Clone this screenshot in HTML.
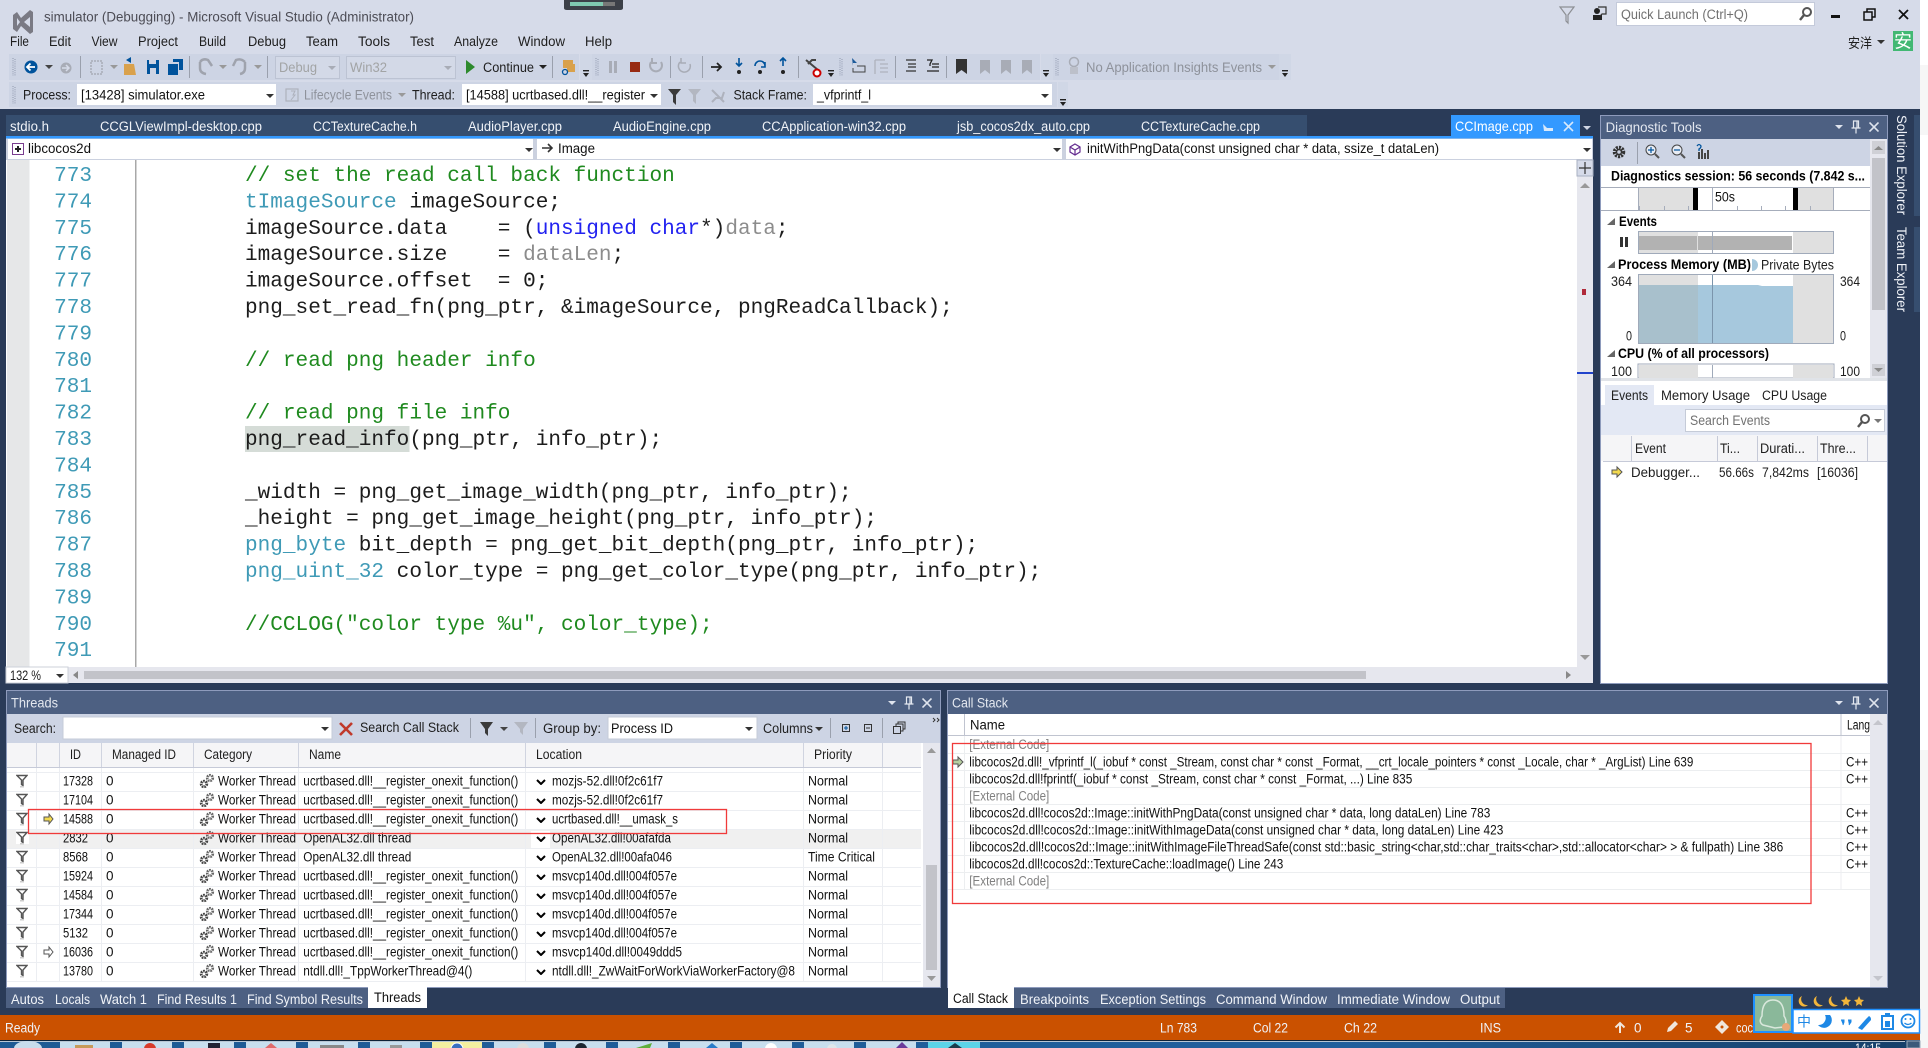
<!DOCTYPE html>
<html><head><meta charset="utf-8"><title>simulator (Debugging) - Microsoft Visual Studio</title>
<style>
html,body{margin:0;padding:0;background:#fff;width:1928px;height:1048px;overflow:hidden}
svg{display:block;position:absolute;left:0;top:0}
text{font-family:"Liberation Sans","Noto Sans CJK SC",sans-serif;font-size:13.5px;fill:#1e1e1e;white-space:pre}
.m{font-family:"Liberation Mono",monospace;font-size:21.07px;fill:#1c1c1c}
.n{font-family:"Liberation Mono",monospace;font-size:21.07px;fill:#3f9ab6;text-anchor:end}
.c{fill:#1f8a1f}.ty{fill:#3f9ab6}.k{fill:#2222f0}.p{fill:#8c8c8c}
.w{fill:#f0f3f8}.g{fill:#a2a4a5}.d{fill:#606060}.e{fill:#808080}.b{font-weight:bold;fill:#000}.k0{fill:#111}
.tt{font-size:14px;fill:#e4e8f0}
</style></head><body>
<svg width="1928" height="1048" viewBox="0 0 1928 1048">
<defs>
<symbol id="fl" viewBox="0 0 12 14" width="12" height="14"><path d="M1 1.500H11L7 6V11.500L5.500 10.500V6Z" fill="#fff" stroke="#555" stroke-width="1.400"/><rect x="4" y="12" width="4" height="1.500" fill="#ccc"/></symbol>
<symbol id="gr" viewBox="0 0 16 16" width="16" height="16"><circle cx="5" cy="11" r="2.800" fill="none" stroke="#444" stroke-width="2.800" stroke-dasharray="1.600 .8"/><circle cx="11" cy="5" r="2.800" fill="none" stroke="#666" stroke-width="2.600" stroke-dasharray="1.600 .8"/></symbol>
<symbol id="ch" viewBox="0 0 10 6" width="10" height="6"><path d="M1 1L5 5L9 1" fill="none" stroke="#000" stroke-width="2"/></symbol>
<symbol id="ar" viewBox="0 0 8 4" width="8" height="4"><path d="M0 0H8L4 4Z"/></symbol>
<symbol id="of" viewBox="0 0 8 8" width="8" height="8"><rect x="1" y="0" width="6" height="1.400" fill="#222"/><path d="M1 3H7L4 7Z" fill="#222"/></symbol>
<symbol id="pin" viewBox="0 0 10 14" width="10" height="14"><path d="M2.500 1H7.500V8H2.500ZM0.500 8H9.500M5 8V13.500M6 1.500V8" fill="none" stroke="#e4e8f0" stroke-width="1.200"/></symbol>
<symbol id="xx" viewBox="0 0 10 10" width="10" height="10"><path d="M0.500 0.500L9.500 9.500M9.500 0.500L0.500 9.500" stroke="#dfe4ee" stroke-width="1.600"/></symbol>
<symbol id="gp" viewBox="0 0 4 20" width="4" height="20"><path d="M1 1V19M3 2V19" stroke="#8f98ad" stroke-width="1" stroke-dasharray="1 1.200"/></symbol>
</defs>

<!-- base -->
<rect width="1928" height="1048" fill="#f6f6f6"/>
<rect x="1920" width="8" height="65" fill="#fff"/><rect x="1920" y="135" width="8" height="615" fill="#fff"/>
<rect width="1920" height="1040" fill="#2a3b58"/>
<rect width="1920" height="109" fill="#d6dbe9"/>

<!-- title -->
<path d="M13 15L17 12L21 18L30 10L33 12V32L30 34L21 26L17 32L13 29V15ZM17 18V26L20 22ZM24 22L30 27V17Z" fill="#7a7a84" fill-rule="evenodd"/>
<text x="44" y="21.500" textLength="370" lengthAdjust="spacingAndGlyphs" style="fill:#4c4c55">simulator (Debugging) - Microsoft Visual Studio (Administrator)</text>
<path d="M564 0H623V8Q623 10 620 10H567Q564 10 564 8Z" fill="#3c4048"/>
<rect x="570" y="2" width="33" height="4" fill="#7fc8b0"/><rect x="603" y="2" width="12" height="4" fill="#777"/>
<path d="M1560 7H1574L1568 15V23L1566 21V15Z" fill="none" stroke="#8d8f94" stroke-width="1.200"/>
<rect x="1593" y="15" width="9" height="5" fill="#222"/><circle cx="1597" cy="11" r="3" fill="#222"/><path d="M1598 7H1606V14H1602L1600 16" fill="none" stroke="#333" stroke-width="1.200"/>
<rect x="1616.500" y="2.500" width="198" height="23" fill="#fff" stroke="#c4cada"/>
<text x="1621" y="19" textLength="127" lengthAdjust="spacingAndGlyphs" style="fill:#717171">Quick Launch (Ctrl+Q)</text>
<circle cx="1807" cy="12" r="4" fill="none" stroke="#555" stroke-width="2"/><path d="M1804 15L1800 20" stroke="#555" stroke-width="2.400"/>
<rect x="1831" y="15" width="9" height="3" fill="#111"/>
<path d="M1864 12H1872V20H1864ZM1867 12V9H1875V17H1872" fill="none" stroke="#111" stroke-width="1.500"/>
<path d="M1899 10L1908 19M1908 10L1899 19" stroke="#111" stroke-width="1.800"/>
<text x="1848" y="48" textLength="24" lengthAdjust="spacingAndGlyphs">安洋</text>
<use href="#ar" x="1877" y="40" fill="#333"/>
<rect x="1893" y="31" width="20" height="20" fill="#42b873"/>
<text x="1894" y="47.500" style="font-size:18px;fill:#fff">安</text>

<!-- menu -->
<text x="10" y="46" textLength="19" lengthAdjust="spacingAndGlyphs">File</text>
<text x="49" y="46" textLength="22" lengthAdjust="spacingAndGlyphs">Edit</text>
<text x="91.500" y="46" textLength="26" lengthAdjust="spacingAndGlyphs">View</text>
<text x="138" y="46" textLength="40" lengthAdjust="spacingAndGlyphs">Project</text>
<text x="199" y="46" textLength="27" lengthAdjust="spacingAndGlyphs">Build</text>
<text x="248" y="46" textLength="38" lengthAdjust="spacingAndGlyphs">Debug</text>
<text x="306" y="46" textLength="32" lengthAdjust="spacingAndGlyphs">Team</text>
<text x="358" y="46" textLength="32" lengthAdjust="spacingAndGlyphs">Tools</text>
<text x="410" y="46" textLength="24" lengthAdjust="spacingAndGlyphs">Test</text>
<text x="454" y="46" textLength="44" lengthAdjust="spacingAndGlyphs">Analyze</text>
<text x="518" y="46" textLength="47" lengthAdjust="spacingAndGlyphs">Window</text>
<text x="585" y="46" textLength="27" lengthAdjust="spacingAndGlyphs">Help</text>

<!-- toolbar 1 -->
<rect x="9" y="54" width="570" height="26" fill="#cdd4e4"/><rect x="580" y="54" width="12" height="26" fill="#d0d7e6"/>
<rect x="592" y="54" width="448" height="26" fill="#cdd4e4"/><rect x="1041" y="54" width="12" height="26" fill="#d0d7e6"/>
<rect x="1053" y="54" width="226" height="26" fill="#cdd4e4"/><rect x="1279" y="54" width="12" height="26" fill="#d0d7e6"/>
<use href="#gp" x="12" y="57"/><use href="#gp" x="595" y="57"/><use href="#gp" x="839" y="57"/><use href="#gp" x="1055" y="57"/>
<circle cx="31" cy="67" r="6.500" fill="#00539c"/><path d="M35 67H28M30.500 63.500L27 67L30.500 70.500" stroke="#fff" stroke-width="1.800" fill="none"/>
<use href="#ar" x="45" y="65" fill="#444"/>
<circle cx="66" cy="68" r="5.500" fill="#a8acb6"/><path d="M62 68H68M66 65L69 68L66 71" stroke="#d6dbe9" stroke-width="1.500" fill="none"/>
<g fill="#9aa0ad"><rect x="80" y="56" width="1" height="22"/><rect x="189" y="56" width="1" height="22"/><rect x="267" y="56" width="1" height="22"/><rect x="552" y="56" width="1" height="22"/><rect x="670" y="56" width="1" height="22"/><rect x="702" y="56" width="1" height="22"/><rect x="798" y="56" width="1" height="22"/><rect x="895" y="56" width="1" height="22"/><rect x="946" y="56" width="1" height="22"/></g>
<rect x="91" y="61" width="11" height="13" fill="none" stroke="#a8acb6" stroke-width="1.500" stroke-dasharray="2 1"/><use href="#ar" x="110" y="65" fill="#999"/>
<path d="M124 64H134L136 75H124Z" fill="#d9a14c"/><path d="M126 60L131 57V63Z" fill="#00539c"/>
<path d="M147 60H159V74H147Z" fill="#00539c"/><rect x="149" y="60" width="7" height="4" fill="#cdd4e4"/><rect x="150" y="68" width="6" height="6" fill="#cdd4e4"/>
<path d="M168 64H178V75H168Z" fill="#00539c"/><path d="M173 59H183V70H179V62H173Z" fill="#00539c"/>
<path d="M200 62V68Q200 73 206 74M200 62Q203 58 208 60L212 66" fill="none" stroke="#9fa3ad" stroke-width="2.500"/><use href="#ar" x="219" y="65" fill="#999"/>
<path d="M245 62V68Q245 73 240 74M245 62Q241 58 236 60L233 66" fill="none" stroke="#9fa3ad" stroke-width="2.500"/><use href="#ar" x="254" y="65" fill="#999"/>
<rect x="275.500" y="56.500" width="64" height="22" fill="#d3d9e7" stroke="#bcc3d3"/>
<text x="279" y="72" textLength="38" lengthAdjust="spacingAndGlyphs" class="g">Debug</text><use href="#ar" x="328" y="66" fill="#a8acb6"/>
<rect x="346.500" y="56.500" width="109" height="22" fill="#d3d9e7" stroke="#bcc3d3"/>
<text x="350" y="72" textLength="37" lengthAdjust="spacingAndGlyphs" class="g">Win32</text><use href="#ar" x="444" y="66" fill="#a8acb6"/>
<path d="M466 60L475 67L466 74Z" fill="#2d8a2d"/>
<text x="483" y="72" textLength="51" lengthAdjust="spacingAndGlyphs">Continue</text><use href="#ar" x="539" y="65" fill="#222"/>
<rect x="563" y="60" width="10" height="8" fill="#d9a14c"/><rect x="567" y="64" width="8" height="8" fill="#d9a14c"/><circle cx="565" cy="72" r="2.500" fill="none" stroke="#00539c" stroke-width="1.300"/>
<use href="#of" x="582" y="70"/>
<rect x="609" y="61" width="3" height="12" fill="#a8acb6"/><rect x="614" y="61" width="3" height="12" fill="#a8acb6"/>
<rect x="630" y="62" width="10" height="10" fill="#972a12"/>
<path d="M651 62A6 6 0 1 0 661 62M652 58V63H657" fill="none" stroke="#a8acb6" stroke-width="2"/>
<path d="M680 62A6 6 0 1 0 690 64M681 58V63H686" fill="none" stroke="#a8acb6" stroke-width="1.500"/>
<path d="M711 67H721M717 63L721 67L717 71" fill="none" stroke="#222" stroke-width="1.800"/>
<path d="M739 58V66M736 63L739 66L742 63" fill="none" stroke="#00539c" stroke-width="1.600"/><circle cx="739" cy="72" r="2" fill="#222"/>
<path d="M755 66A5 5 0 0 1 765 66M765 62V67H761" fill="none" stroke="#00539c" stroke-width="1.600"/><circle cx="760" cy="72" r="2" fill="#222"/>
<path d="M783 66V58M780 61L783 58L786 61" fill="none" stroke="#00539c" stroke-width="1.600"/><circle cx="783" cy="72" r="2" fill="#222"/>
<path d="M806 60L818 70M808 64L812 60H816" fill="none" stroke="#444" stroke-width="2"/><circle cx="817" cy="73" r="3.500" fill="#fff" stroke="#c00" stroke-width="2"/>
<use href="#of" x="827" y="70"/><use href="#of" x="1042" y="70"/><use href="#of" x="1281" y="70"/>
<path d="M852 58L857 63H853V66" fill="#1d5a9a"/><path d="M857 66H865V72H853V68" fill="none" stroke="#444"/>
<path d="M875 60H885M875 60V74M880 64H888M880 68H888M880 72H888" stroke="#aeb2bd" stroke-width="1.300" fill="none"/>
<path d="M906 60H916M908 64H916M908 67H916M906 71H916" stroke="#333" stroke-width="1.300"/>
<path d="M927 60H932L930 64V66M932 64H939M932 67H939M927 71H939" fill="none" stroke="#222" stroke-width="1.300"/>
<path d="M956 59H967V74L961.500 70L956 74Z" fill="#333"/>
<g fill="#a8acb6"><path d="M980 60H990V74L985 70L980 74Z"/><path d="M1001 60H1011V74L1006 70L1001 74Z"/><path d="M1022 60H1032V74L1027 70L1022 74Z"/></g>
<circle cx="1074" cy="62" r="4.500" fill="none" stroke="#a8acb6" stroke-width="1.500"/><path d="M1070 67H1078V74H1070Z" fill="#bcc0ca"/>
<text x="1086" y="72" textLength="176" lengthAdjust="spacingAndGlyphs" style="fill:#8e929b">No Application Insights Events</text><use href="#ar" x="1268" y="65" fill="#999"/>

<!-- toolbar 2 -->
<rect x="9" y="82" width="1048" height="25" fill="#cdd4e4"/><rect x="1058" y="82" width="10" height="25" fill="#d0d7e6"/>
<use href="#gp" x="12" y="85"/><use href="#of" x="1059" y="99"/>
<text x="23" y="99.500" textLength="48" lengthAdjust="spacingAndGlyphs">Process:</text>
<rect x="77" y="84" width="199" height="21" fill="#fff"/>
<text x="81" y="99.500" textLength="124" lengthAdjust="spacingAndGlyphs" class="k0">[13428] simulator.exe</text><use href="#ar" x="266" y="94" fill="#333"/>
<rect x="286" y="89" width="12" height="12" fill="none" stroke="#aeb2bd" stroke-width="1.200"/><path d="M291 91H295L293 95H295L291 100" fill="none" stroke="#aeb2bd"/>
<text x="304" y="99.500" textLength="88" lengthAdjust="spacingAndGlyphs" style="fill:#8e929b">Lifecycle Events</text><use href="#ar" x="398" y="93" fill="#999"/>
<text x="412" y="99.500" textLength="43" lengthAdjust="spacingAndGlyphs">Thread:</text>
<rect x="462" y="84" width="199" height="21" fill="#fff"/>
<text x="466" y="99.500" textLength="179" lengthAdjust="spacingAndGlyphs" class="k0">[14588] ucrtbased.dll!__register</text><use href="#ar" x="650" y="94" fill="#333"/>
<path d="M668 89H681L676 95V105L673 102V95Z" fill="#3a3a3a"/>
<path d="M688 89H701L696 95V104L693 101V95Z" fill="#b3b7c1"/>
<path d="M712 90L724 102M712 102L716 98H722L724 92" fill="none" stroke="#aeb2bd" stroke-width="2"/>
<text x="733.500" y="99.500" textLength="73.500" lengthAdjust="spacingAndGlyphs">Stack Frame:</text>
<rect x="813" y="84" width="239" height="21" fill="#fff"/>
<text x="817" y="99.500" textLength="54" lengthAdjust="spacingAndGlyphs" class="k0">_vfprintf_l</text><use href="#ar" x="1041" y="94" fill="#333"/>

<!-- tabs -->
<rect x="6" y="115" width="1301" height="21" fill="#364e6f"/>
<g class="w">
<text class="w" x="10" y="131" textLength="39" lengthAdjust="spacingAndGlyphs">stdio.h</text>
<text class="w" x="100" y="131" textLength="162" lengthAdjust="spacingAndGlyphs">CCGLViewImpl-desktop.cpp</text>
<text class="w" x="313" y="131" textLength="104" lengthAdjust="spacingAndGlyphs">CCTextureCache.h</text>
<text class="w" x="468" y="131" textLength="94" lengthAdjust="spacingAndGlyphs">AudioPlayer.cpp</text>
<text class="w" x="613" y="131" textLength="98" lengthAdjust="spacingAndGlyphs">AudioEngine.cpp</text>
<text class="w" x="762" y="131" textLength="144" lengthAdjust="spacingAndGlyphs">CCApplication-win32.cpp</text>
<text class="w" x="957" y="131" textLength="133" lengthAdjust="spacingAndGlyphs">jsb_cocos2dx_auto.cpp</text>
<text class="w" x="1141" y="131" textLength="119" lengthAdjust="spacingAndGlyphs">CCTextureCache.cpp</text>
</g>
<rect x="1451" y="115" width="129" height="21" fill="#3399ff"/>
<text x="1455" y="131" textLength="78" lengthAdjust="spacingAndGlyphs" style="fill:#fff;font-size:14px">CCImage.cpp</text>
<path d="M1543 124L1547 128H1553V131H1544Z" fill="#d8e9fb"/>
<path d="M1564 122L1573 131M1573 122L1564 131" stroke="#d8e9fb" stroke-width="1.600"/>
<use href="#ar" x="1583" y="126" fill="#d0d6e2"/>
<rect x="6" y="136" width="1587" height="2.500" fill="#3399ff"/>

<!-- nav bar -->
<rect x="6" y="138.500" width="1587" height="21.500" fill="#cbd1df"/>
<rect x="8" y="139" width="525" height="20" fill="#fff"/><rect x="537" y="139" width="525" height="20" fill="#fff"/><rect x="1066" y="139" width="526" height="20" fill="#fff"/>
<rect x="12.500" y="143.500" width="11" height="11" fill="#fff" stroke="#7a3d8f"/><path d="M15 149H21M18 146V152" stroke="#222" stroke-width="2"/>
<text x="28" y="153" textLength="63" lengthAdjust="spacingAndGlyphs" class="k0">libcocos2d</text>
<use href="#ar" x="525" y="148" fill="#333"/>
<path d="M542 148H552M548 144L552 148L548 152" fill="none" stroke="#333" stroke-width="1.600"/>
<text x="558" y="153" textLength="37" lengthAdjust="spacingAndGlyphs" class="k0">Image</text>
<use href="#ar" x="1053" y="148" fill="#333"/>
<path d="M1075 144L1080 147V152L1075 155L1070 152V147ZM1070 147L1075 150L1080 147M1075 150V155" fill="none" stroke="#652d90" stroke-width="1.200"/>
<text x="1087" y="153" textLength="352" lengthAdjust="spacingAndGlyphs" class="k0">initWithPngData(const unsigned char * data, ssize_t dataLen)</text>
<use href="#ar" x="1583" y="148" fill="#333"/>

<!-- editor -->
<rect x="6" y="160" width="1571" height="507" fill="#fff"/>
<rect x="7" y="160" width="22.500" height="507" fill="#e6e7e8"/>
<rect x="135" y="160" width="1.500" height="507" fill="#a8a8a8"/>
<rect x="245" y="426" width="164.500" height="26" fill="#d5dcd7"/>
<text class="n" x="92" y="181">773</text><text class="n" x="92" y="207.400">774</text><text class="n" x="92" y="233.800">775</text><text class="n" x="92" y="260.200">776</text><text class="n" x="92" y="286.600">777</text><text class="n" x="92" y="313">778</text><text class="n" x="92" y="339.400">779</text><text class="n" x="92" y="365.800">780</text><text class="n" x="92" y="392.200">781</text><text class="n" x="92" y="418.600">782</text><text class="n" x="92" y="445">783</text><text class="n" x="92" y="471.400">784</text><text class="n" x="92" y="497.800">785</text><text class="n" x="92" y="524.200">786</text><text class="n" x="92" y="550.600">787</text><text class="n" x="92" y="577">788</text><text class="n" x="92" y="603.400">789</text><text class="n" x="92" y="629.800">790</text><text class="n" x="92" y="656.200">791</text>
<text class="m" x="245" y="181"><tspan class="c">// set the read call back function</tspan></text>
<text class="m" x="245" y="207.400"><tspan class="ty">tImageSource</tspan> imageSource;</text>
<text class="m" x="245" y="233.800">imageSource.data    = (<tspan class="k">unsigned</tspan> <tspan class="k">char</tspan>*)<tspan class="p">data</tspan>;</text>
<text class="m" x="245" y="260.200">imageSource.size    = <tspan class="p">dataLen</tspan>;</text>
<text class="m" x="245" y="286.600">imageSource.offset  = 0;</text>
<text class="m" x="245" y="313">png_set_read_fn(png_ptr, &amp;imageSource, pngReadCallback);</text>
<text class="m" x="245" y="365.800"><tspan class="c">// read png header info</tspan></text>
<text class="m" x="245" y="418.600"><tspan class="c">// read png file info</tspan></text>
<text class="m" x="245" y="445">png_read_info(png_ptr, info_ptr);</text>
<text class="m" x="245" y="497.800">_width = png_get_image_width(png_ptr, info_ptr);</text>
<text class="m" x="245" y="524.200">_height = png_get_image_height(png_ptr, info_ptr);</text>
<text class="m" x="245" y="550.600"><tspan class="ty">png_byte</tspan> bit_depth = png_get_bit_depth(png_ptr, info_ptr);</text>
<text class="m" x="245" y="577"><tspan class="ty">png_uint_32</tspan> color_type = png_get_color_type(png_ptr, info_ptr);</text>
<text class="m" x="245" y="629.800"><tspan class="c">//CCLOG("color type %u", color_type);</tspan></text>

<!-- editor scrollbars -->
<rect x="1577" y="160" width="16" height="507" fill="#e6e7ee"/>
<rect x="1577" y="160" width="16" height="16" fill="#d6dbe9" stroke="#a8b0c2"/><path d="M1579 168H1591M1585 162V174" stroke="#333" stroke-width="1.200"/>
<path d="M1580 188L1585 183L1590 188Z" fill="#999"/><path d="M1580 655H1590L1585 660Z" fill="#999"/>
<rect x="1582" y="289" width="4" height="6" fill="#b02a3a"/><rect x="1577" y="372" width="16" height="2" fill="#2244cc"/>
<rect x="6" y="667" width="1587" height="16" fill="#e6e7ee"/>
<rect x="6" y="667" width="62" height="16" fill="#fff" stroke="#ccd0da"/>
<text x="10" y="680" textLength="31" lengthAdjust="spacingAndGlyphs">132 %</text><use href="#ar" x="56" y="674" fill="#333"/>
<path d="M78 671V679L73 675Z" fill="#888"/><rect x="84" y="671" width="1282" height="8" fill="#c2c3c9"/><path d="M1566 671V679L1571 675Z" fill="#888"/>

<!-- diagnostic tools -->
<rect x="1600.500" y="115.500" width="287" height="568" fill="#fff" stroke="#8e9bbc"/>
<rect x="1601" y="116" width="286" height="23" fill="#4d6082"/>
<text class="tt" x="1605.600" y="132" textLength="96" lengthAdjust="spacingAndGlyphs">Diagnostic Tools</text>
<use href="#ar" x="1835" y="125" fill="#dfe4ee"/><use href="#pin" x="1851" y="120"/><use href="#xx" x="1869" y="122"/>
<rect x="1601" y="139" width="286" height="27" fill="#cdd4e4"/>
<circle cx="1619" cy="152" r="4.500" fill="none" stroke="#333" stroke-width="3.500" stroke-dasharray="2 1"/><circle cx="1619" cy="152" r="2.500" fill="none" stroke="#333" stroke-width="1.500"/>
<rect x="1637" y="142" width="1" height="22" fill="#9aa0ad"/>
<circle cx="1651" cy="150" r="5" fill="#e8ecf4" stroke="#444"/><path d="M1648 150H1654M1651 147V153" stroke="#00539c" stroke-width="1.200"/><path d="M1655 154L1659 158" stroke="#555" stroke-width="2"/>
<circle cx="1677" cy="150" r="5" fill="#e8ecf4" stroke="#444"/><path d="M1674 150H1680" stroke="#00539c" stroke-width="1.200"/><path d="M1681 154L1685 158" stroke="#555" stroke-width="2"/>
<path d="M1697 146Q1699 143 1701 146Q1701 148 1699 149V151" fill="none" stroke="#00539c" stroke-width="1.300"/>
<g fill="#444"><rect x="1698" y="152" width="2" height="7"/><rect x="1701" y="149" width="2" height="10"/><rect x="1704" y="153" width="2" height="6"/><rect x="1707" y="150" width="2" height="9"/></g>
<text x="1611" y="180.500" textLength="254" lengthAdjust="spacingAndGlyphs" class="b">Diagnostics session: 56 seconds (7.842 s...</text>
<rect x="1601" y="187" width="269" height="1" fill="#a6adbb"/><rect x="1601" y="210" width="269" height="1" fill="#a6adbb"/>
<rect x="1638" y="188" width="55" height="22" fill="#e0e0e0"/><rect x="1798" y="188" width="35" height="22" fill="#e0e0e0"/>
<rect x="1693" y="188" width="5" height="22" fill="#000"/><rect x="1793" y="188" width="5" height="22" fill="#000"/>
<g fill="#a6adbb"><rect x="1638" y="188" width="1" height="22"/><rect x="1712" y="188" width="1" height="22"/><rect x="1833" y="188" width="1" height="22"/><rect x="1639" y="206" width="1" height="4"/><rect x="1664" y="206" width="1" height="4"/><rect x="1688" y="206" width="1" height="4"/><rect x="1737" y="206" width="1" height="4"/><rect x="1761" y="206" width="1" height="4"/><rect x="1785" y="206" width="1" height="4"/><rect x="1810" y="206" width="1" height="4"/></g>
<text x="1715" y="201.500" textLength="20" lengthAdjust="spacingAndGlyphs" class="k0">50s</text>
<path d="M1607 225H1615V218Z" fill="#666"/>
<text x="1619" y="226" textLength="38" lengthAdjust="spacingAndGlyphs" class="b">Events</text>
<rect x="1620" y="237" width="3" height="10" fill="#333"/><rect x="1625" y="237" width="3" height="10" fill="#333"/>
<rect x="1638.500" y="231.500" width="195" height="22" fill="#fff" stroke="#a0aaba"/>
<rect x="1639" y="232" width="59" height="21" fill="#e0e0e0"/><rect x="1793" y="232" width="40" height="21" fill="#e0e0e0"/>
<rect x="1639" y="236" width="58" height="14" fill="#b2b2b2"/><rect x="1698" y="236" width="94" height="14" fill="#b2b2b2"/>
<rect x="1712" y="232" width="1" height="21" fill="#a0aaba"/>
<path d="M1607 268H1615V261Z" fill="#666"/>
<text x="1618" y="269" textLength="133" lengthAdjust="spacingAndGlyphs" class="b">Process Memory (MB)</text>
<path d="M1752 259A6 6 0 0 1 1752 271Z" fill="#a6c8dd"/>
<text x="1761" y="269.500" textLength="73" lengthAdjust="spacingAndGlyphs">Private Bytes</text>
<text x="1611" y="286" textLength="21" lengthAdjust="spacingAndGlyphs">364</text><text x="1840" y="286" textLength="20" lengthAdjust="spacingAndGlyphs">364</text>
<text x="1626" y="340.500" textLength="6" lengthAdjust="spacingAndGlyphs">0</text><text x="1840" y="340.500" textLength="6" lengthAdjust="spacingAndGlyphs">0</text>
<rect x="1638.500" y="274.500" width="195" height="69" fill="#fff" stroke="#a0aaba"/>
<rect x="1639" y="275" width="59" height="68" fill="#e0e0e0"/><rect x="1793" y="275" width="40" height="68" fill="#e0e0e0"/>
<rect x="1639" y="285" width="59" height="58" fill="#a8c0cc"/>
<path d="M1698 285H1758L1762 286H1793V343H1698Z" fill="#a6c8dd"/>
<rect x="1712" y="275" width="1" height="68" fill="#7b95ac"/>
<path d="M1607 357H1615V350Z" fill="#666"/>
<text x="1618" y="358" textLength="151" lengthAdjust="spacingAndGlyphs" class="b">CPU (% of all processors)</text>
<text x="1611" y="376" textLength="21" lengthAdjust="spacingAndGlyphs">100</text><text x="1840" y="376" textLength="20" lengthAdjust="spacingAndGlyphs">100</text>
<rect x="1638" y="364" width="196" height="14" fill="#fff" stroke="#a0aaba"/>
<rect x="1639" y="365" width="59" height="13" fill="#e0e0e0"/><rect x="1793" y="365" width="40" height="13" fill="#e0e0e0"/><rect x="1712" y="365" width="1" height="13" fill="#a0aaba"/>
<rect x="1870" y="139" width="17" height="239" fill="#e6e7ee"/>
<rect x="1872" y="141" width="13" height="13" fill="#cfd0d6"/><path d="M1874 150L1878.500 146L1883 150Z" fill="#8a8a8a"/>
<rect x="1872" y="158" width="13" height="152" fill="#c2c3c9"/>
<rect x="1872" y="364" width="13" height="12" fill="#cfd0d6"/><path d="M1874 368H1883L1878.500 372Z" fill="#8a8a8a"/>
<rect x="1601" y="378" width="286" height="3" fill="#e0e3e8"/>
<rect x="1601" y="405" width="286" height="30" fill="#e3e8f4"/>
<rect x="1605" y="385" width="49" height="22" fill="#e3e8f4"/>
<text x="1611" y="400" textLength="37" lengthAdjust="spacingAndGlyphs">Events</text>
<rect x="1655" y="385" width="228" height="20" fill="#fff"/>
<text x="1661" y="400" textLength="89" lengthAdjust="spacingAndGlyphs">Memory Usage</text>
<text x="1762" y="400" textLength="65" lengthAdjust="spacingAndGlyphs">CPU Usage</text>
<rect x="1685.500" y="409.500" width="199" height="22" fill="#fff" stroke="#c5cbd8"/>
<text x="1690" y="425" textLength="80" lengthAdjust="spacingAndGlyphs" style="fill:#717171">Search Events</text>
<circle cx="1865" cy="419" r="4" fill="none" stroke="#555" stroke-width="2"/><path d="M1862 422L1858 427" stroke="#555" stroke-width="2.400"/><use href="#ar" x="1874" y="419" fill="#777"/>
<rect x="1601" y="435" width="286" height="26" fill="#f5f5f7"/><rect x="1603" y="461" width="284" height="1" fill="#c6cad8"/>
<g fill="#c6cad8"><rect x="1631" y="436" width="1" height="25"/><rect x="1717" y="436" width="1" height="25"/><rect x="1757" y="436" width="1" height="25"/><rect x="1817" y="436" width="1" height="25"/><rect x="1867" y="436" width="1" height="25"/></g>
<text x="1635" y="453" textLength="31" lengthAdjust="spacingAndGlyphs">Event</text>
<text x="1720" y="453" textLength="20" lengthAdjust="spacingAndGlyphs">Ti...</text>
<text x="1760" y="453" textLength="45" lengthAdjust="spacingAndGlyphs">Durati...</text>
<text x="1820" y="453" textLength="36" lengthAdjust="spacingAndGlyphs">Thre...</text>
<path d="M1612 470H1617V467L1622 472L1617 477V474H1612Z" fill="#f2d94e" stroke="#555"/>
<text x="1631" y="477" textLength="69" lengthAdjust="spacingAndGlyphs">Debugger...</text>
<text x="1719" y="477" textLength="35" lengthAdjust="spacingAndGlyphs">56.66s</text>
<text x="1762" y="477" textLength="47" lengthAdjust="spacingAndGlyphs">7,842ms</text>
<text x="1817" y="477" textLength="41" lengthAdjust="spacingAndGlyphs">[16036]</text>

<!-- right side tabs -->
<rect x="1914" y="115" width="6" height="101" fill="#364e6f"/><rect x="1914" y="227" width="6" height="85" fill="#364e6f"/>
<text class="w" transform="translate(1897 115) rotate(90)" textLength="100" lengthAdjust="spacingAndGlyphs">Solution Explorer</text>
<text class="w" transform="translate(1897 227) rotate(90)" textLength="85" lengthAdjust="spacingAndGlyphs">Team Explorer</text>

<!-- threads panel -->
<rect x="6.500" y="690.500" width="934" height="297" fill="#fff" stroke="#8e9bbc"/>
<rect x="7" y="691" width="933" height="23" fill="#4d6082"/>
<text class="tt" x="11" y="707.500" textLength="47" lengthAdjust="spacingAndGlyphs">Threads</text>
<use href="#ar" x="888" y="701" fill="#dfe4ee"/><use href="#pin" x="904" y="696"/><use href="#xx" x="922" y="698"/>
<rect x="7" y="714" width="933" height="29" fill="#cdd4e4"/>
<text x="14" y="733" textLength="42" lengthAdjust="spacingAndGlyphs">Search:</text>
<rect x="63" y="717" width="269" height="22" fill="#fff" stroke="#c5cbd8"/><use href="#ar" x="321" y="727" fill="#333"/>
<path d="M340 723L352 735M352 723L340 735" stroke="#c0392b" stroke-width="2.600"/>
<text x="360" y="732" textLength="99" lengthAdjust="spacingAndGlyphs">Search Call Stack</text>
<g fill="#9aa0ad"><rect x="470" y="718" width="1" height="20"/><rect x="535" y="718" width="1" height="20"/><rect x="830" y="718" width="1" height="20"/><rect x="882" y="718" width="1" height="20"/></g>
<path d="M480 722H493L488 729V736L485 733V729Z" fill="#3a3a3a"/><use href="#ar" x="500" y="727" fill="#444"/>
<path d="M514 722H528L523 729V735L520 732V729Z" fill="#b3b7c1"/>
<text x="543" y="733" textLength="58" lengthAdjust="spacingAndGlyphs">Group by:</text>
<rect x="608" y="717" width="149" height="22" fill="#fff" stroke="#c5cbd8"/>
<text x="611" y="733" textLength="62" lengthAdjust="spacingAndGlyphs" class="k0">Process ID</text><use href="#ar" x="745" y="727" fill="#333"/>
<text x="763" y="733" textLength="50" lengthAdjust="spacingAndGlyphs">Columns</text><use href="#ar" x="815" y="727" fill="#333"/>
<rect x="842.500" y="724.500" width="7" height="7" fill="none" stroke="#333"/><path d="M844 728H848M846 726V730" stroke="#00539c"/>
<rect x="864.500" y="724.500" width="7" height="7" fill="none" stroke="#333"/><path d="M866 728H870" stroke="#333"/>
<rect x="893.500" y="726.500" width="7" height="7" fill="#cdd4e4" stroke="#333"/><path d="M896 726V724H903V731H901M898 724V722H905V729H903" fill="none" stroke="#333"/>
<path d="M933 718L935 720L933 722M937 718L939 720L937 722" fill="none" stroke="#333"/>
<rect x="7" y="743" width="914" height="24" fill="#f5f5f7"/><rect x="7" y="767" width="914" height="1" fill="#c6cad8"/>
<g fill="#d0d4e0"><rect x="36" y="743" width="1" height="24"/><rect x="59" y="743" width="1" height="24"/><rect x="101" y="743" width="1" height="24"/><rect x="193" y="743" width="1" height="24"/><rect x="298" y="743" width="1" height="24"/><rect x="525" y="743" width="1" height="24"/><rect x="803" y="743" width="1" height="24"/><rect x="882" y="743" width="1" height="24"/></g>
<text x="70" y="759" textLength="11" lengthAdjust="spacingAndGlyphs">ID</text>
<text x="112" y="759" textLength="64" lengthAdjust="spacingAndGlyphs">Managed ID</text>
<text x="204" y="759" textLength="48" lengthAdjust="spacingAndGlyphs">Category</text>
<text x="309" y="759" textLength="32" lengthAdjust="spacingAndGlyphs">Name</text>
<text x="536" y="759" textLength="46" lengthAdjust="spacingAndGlyphs">Location</text>
<text x="814" y="759" textLength="38" lengthAdjust="spacingAndGlyphs">Priority</text>
<rect x="7" y="829" width="914" height="19.500" fill="#f0f0f0"/>
<rect x="16" y="829" width="13" height="15" fill="#fff"/><rect x="531" y="831" width="19" height="17" fill="#fff"/>
<g fill="#eceef2"><rect x="7" y="772" width="914" height="1"/><rect x="7" y="791" width="914" height="1"/><rect x="7" y="810" width="914" height="1"/><rect x="7" y="829" width="914" height="1"/><rect x="7" y="848" width="914" height="1"/><rect x="7" y="867" width="914" height="1"/><rect x="7" y="886" width="914" height="1"/><rect x="7" y="905" width="914" height="1"/><rect x="7" y="924" width="914" height="1"/><rect x="7" y="943" width="914" height="1"/><rect x="7" y="962" width="914" height="1"/><rect x="7" y="981" width="914" height="1"/>
<rect x="36" y="768" width="1" height="214"/><rect x="59" y="768" width="1" height="214"/><rect x="101" y="768" width="1" height="214"/><rect x="193" y="768" width="1" height="214"/><rect x="298" y="768" width="1" height="214"/><rect x="525" y="768" width="1" height="214"/><rect x="803" y="768" width="1" height="214"/><rect x="882" y="768" width="1" height="214"/></g>
<use href="#fl" x="16" y="774"/><use href="#fl" x="16" y="793"/><use href="#fl" x="16" y="812"/><use href="#fl" x="16" y="831"/><use href="#fl" x="16" y="850"/><use href="#fl" x="16" y="869"/><use href="#fl" x="16" y="888"/><use href="#fl" x="16" y="907"/><use href="#fl" x="16" y="926"/><use href="#fl" x="16" y="945"/><use href="#fl" x="16" y="964"/>
<use href="#gr" x="199" y="773"/><use href="#gr" x="199" y="792"/><use href="#gr" x="199" y="811"/><use href="#gr" x="199" y="830"/><use href="#gr" x="199" y="849"/><use href="#gr" x="199" y="868"/><use href="#gr" x="199" y="887"/><use href="#gr" x="199" y="906"/><use href="#gr" x="199" y="925"/><use href="#gr" x="199" y="944"/><use href="#gr" x="199" y="963"/>
<use href="#ch" x="536" y="779"/><use href="#ch" x="536" y="798"/><use href="#ch" x="536" y="817"/><use href="#ch" x="536" y="836"/><use href="#ch" x="536" y="855"/><use href="#ch" x="536" y="874"/><use href="#ch" x="536" y="893"/><use href="#ch" x="536" y="912"/><use href="#ch" x="536" y="931"/><use href="#ch" x="536" y="950"/><use href="#ch" x="536" y="969"/>
<path d="M44 817H49V814L53 819L49 824V821H44Z" fill="#f2d94e" stroke="#555"/>
<path d="M44 950H49V947L53 952L49 957V954H44Z" fill="#fff" stroke="#555"/>

<g>
<text class="k0" x="63" y="785.500" textLength="30" lengthAdjust="spacingAndGlyphs">17328</text><text class="k0" x="106" y="785.500">0</text><text class="k0" x="218" y="785.500" textLength="78" lengthAdjust="spacingAndGlyphs">Worker Thread</text><text class="k0" x="303.300" y="785.500" textLength="215" lengthAdjust="spacingAndGlyphs">ucrtbased.dll!__register_onexit_function()</text><text class="k0" x="552" y="785.500" textLength="111" lengthAdjust="spacingAndGlyphs">mozjs-52.dll!0f2c61f7</text><text class="k0" x="808" y="785.500" textLength="40" lengthAdjust="spacingAndGlyphs">Normal</text>
<text class="k0" x="63" y="804.500" textLength="30" lengthAdjust="spacingAndGlyphs">17104</text><text class="k0" x="106" y="804.500">0</text><text class="k0" x="218" y="804.500" textLength="78" lengthAdjust="spacingAndGlyphs">Worker Thread</text><text class="k0" x="303.300" y="804.500" textLength="215" lengthAdjust="spacingAndGlyphs">ucrtbased.dll!__register_onexit_function()</text><text class="k0" x="552" y="804.500" textLength="111" lengthAdjust="spacingAndGlyphs">mozjs-52.dll!0f2c61f7</text><text class="k0" x="808" y="804.500" textLength="40" lengthAdjust="spacingAndGlyphs">Normal</text>
<text class="k0" x="63" y="823.500" textLength="30" lengthAdjust="spacingAndGlyphs">14588</text><text class="k0" x="106" y="823.500">0</text><text class="k0" x="218" y="823.500" textLength="78" lengthAdjust="spacingAndGlyphs">Worker Thread</text><text class="k0" x="303.300" y="823.500" textLength="215" lengthAdjust="spacingAndGlyphs">ucrtbased.dll!__register_onexit_function()</text><text class="k0" x="552" y="823.500" textLength="126" lengthAdjust="spacingAndGlyphs">ucrtbased.dll!__umask_s</text><text class="k0" x="808" y="823.500" textLength="40" lengthAdjust="spacingAndGlyphs">Normal</text>
<text class="k0" x="63" y="842.500" textLength="25" lengthAdjust="spacingAndGlyphs">2832</text><text class="k0" x="106" y="842.500">0</text><text class="k0" x="218" y="842.500" textLength="78" lengthAdjust="spacingAndGlyphs">Worker Thread</text><text class="k0" x="303.300" y="842.500" textLength="108" lengthAdjust="spacingAndGlyphs">OpenAL32.dll thread</text><text class="k0" x="552" y="842.500" textLength="119" lengthAdjust="spacingAndGlyphs">OpenAL32.dll!00afafda</text><text class="k0" x="808" y="842.500" textLength="40" lengthAdjust="spacingAndGlyphs">Normal</text>
<text class="k0" x="63" y="861.500" textLength="25" lengthAdjust="spacingAndGlyphs">8568</text><text class="k0" x="106" y="861.500">0</text><text class="k0" x="218" y="861.500" textLength="78" lengthAdjust="spacingAndGlyphs">Worker Thread</text><text class="k0" x="303.300" y="861.500" textLength="108" lengthAdjust="spacingAndGlyphs">OpenAL32.dll thread</text><text class="k0" x="552" y="861.500" textLength="120" lengthAdjust="spacingAndGlyphs">OpenAL32.dll!00afa046</text><text class="k0" x="808" y="861.500" textLength="67" lengthAdjust="spacingAndGlyphs">Time Critical</text>
<text class="k0" x="63" y="880.500" textLength="30" lengthAdjust="spacingAndGlyphs">15924</text><text class="k0" x="106" y="880.500">0</text><text class="k0" x="218" y="880.500" textLength="78" lengthAdjust="spacingAndGlyphs">Worker Thread</text><text class="k0" x="303.300" y="880.500" textLength="215" lengthAdjust="spacingAndGlyphs">ucrtbased.dll!__register_onexit_function()</text><text class="k0" x="552" y="880.500" textLength="125" lengthAdjust="spacingAndGlyphs">msvcp140d.dll!004f057e</text><text class="k0" x="808" y="880.500" textLength="40" lengthAdjust="spacingAndGlyphs">Normal</text>
<text class="k0" x="63" y="899.500" textLength="30" lengthAdjust="spacingAndGlyphs">14584</text><text class="k0" x="106" y="899.500">0</text><text class="k0" x="218" y="899.500" textLength="78" lengthAdjust="spacingAndGlyphs">Worker Thread</text><text class="k0" x="303.300" y="899.500" textLength="215" lengthAdjust="spacingAndGlyphs">ucrtbased.dll!__register_onexit_function()</text><text class="k0" x="552" y="899.500" textLength="125" lengthAdjust="spacingAndGlyphs">msvcp140d.dll!004f057e</text><text class="k0" x="808" y="899.500" textLength="40" lengthAdjust="spacingAndGlyphs">Normal</text>
<text class="k0" x="63" y="918.500" textLength="30" lengthAdjust="spacingAndGlyphs">17344</text><text class="k0" x="106" y="918.500">0</text><text class="k0" x="218" y="918.500" textLength="78" lengthAdjust="spacingAndGlyphs">Worker Thread</text><text class="k0" x="303.300" y="918.500" textLength="215" lengthAdjust="spacingAndGlyphs">ucrtbased.dll!__register_onexit_function()</text><text class="k0" x="552" y="918.500" textLength="125" lengthAdjust="spacingAndGlyphs">msvcp140d.dll!004f057e</text><text class="k0" x="808" y="918.500" textLength="40" lengthAdjust="spacingAndGlyphs">Normal</text>
<text class="k0" x="63" y="937.500" textLength="25" lengthAdjust="spacingAndGlyphs">5132</text><text class="k0" x="106" y="937.500">0</text><text class="k0" x="218" y="937.500" textLength="78" lengthAdjust="spacingAndGlyphs">Worker Thread</text><text class="k0" x="303.300" y="937.500" textLength="215" lengthAdjust="spacingAndGlyphs">ucrtbased.dll!__register_onexit_function()</text><text class="k0" x="552" y="937.500" textLength="125" lengthAdjust="spacingAndGlyphs">msvcp140d.dll!004f057e</text><text class="k0" x="808" y="937.500" textLength="40" lengthAdjust="spacingAndGlyphs">Normal</text>
<text class="k0" x="63" y="956.500" textLength="30" lengthAdjust="spacingAndGlyphs">16036</text><text class="k0" x="106" y="956.500">0</text><text class="k0" x="218" y="956.500" textLength="78" lengthAdjust="spacingAndGlyphs">Worker Thread</text><text class="k0" x="303.300" y="956.500" textLength="215" lengthAdjust="spacingAndGlyphs">ucrtbased.dll!__register_onexit_function()</text><text class="k0" x="552" y="956.500" textLength="130" lengthAdjust="spacingAndGlyphs">msvcp140d.dll!0049ddd5</text><text class="k0" x="808" y="956.500" textLength="40" lengthAdjust="spacingAndGlyphs">Normal</text>
<text class="k0" x="63" y="975.500" textLength="30" lengthAdjust="spacingAndGlyphs">13780</text><text class="k0" x="106" y="975.500">0</text><text class="k0" x="218" y="975.500" textLength="78" lengthAdjust="spacingAndGlyphs">Worker Thread</text><text class="k0" x="303.300" y="975.500" textLength="169" lengthAdjust="spacingAndGlyphs">ntdll.dll!_TppWorkerThread@4()</text><text class="k0" x="552" y="975.500" textLength="243" lengthAdjust="spacingAndGlyphs">ntdll.dll!_ZwWaitForWorkViaWorkerFactory@8</text><text class="k0" x="808" y="975.500" textLength="40" lengthAdjust="spacingAndGlyphs">Normal</text>
</g>
<rect x="923" y="743" width="17" height="244" fill="#e6e7ee"/>
<path d="M927 753L931.500 748L936 753Z" fill="#999"/><rect x="926" y="865" width="11" height="105" fill="#c2c3c9"/><path d="M927 976H936L931.500 981Z" fill="#999"/>
<rect x="28.500" y="809.500" width="698" height="24" fill="none" stroke="#f03a3a" stroke-width="1.300"/>

<!-- bottom-left tabs -->
<rect x="6" y="988" width="362" height="20" fill="#4d6082"/>
<rect x="368" y="987" width="59" height="21" fill="#fff"/>
<text class="w" x="11" y="1004" textLength="33" lengthAdjust="spacingAndGlyphs">Autos</text>
<text class="w" x="55" y="1004" textLength="35" lengthAdjust="spacingAndGlyphs">Locals</text>
<text class="w" x="100" y="1004" textLength="47" lengthAdjust="spacingAndGlyphs">Watch 1</text>
<text class="w" x="157" y="1004" textLength="80" lengthAdjust="spacingAndGlyphs">Find Results 1</text>
<text class="w" x="247" y="1004" textLength="116" lengthAdjust="spacingAndGlyphs">Find Symbol Results</text>
<text class="k0" x="374" y="1002" textLength="47" lengthAdjust="spacingAndGlyphs">Threads</text>

<!-- call stack panel -->
<rect x="947.500" y="690.500" width="940" height="297" fill="#fff" stroke="#8e9bbc"/>
<rect x="948" y="691" width="939" height="23" fill="#4d6082"/>
<text class="tt" x="952" y="707.500" textLength="56" lengthAdjust="spacingAndGlyphs">Call Stack</text>
<use href="#ar" x="1835" y="701" fill="#dfe4ee"/><use href="#pin" x="1851" y="696"/><use href="#xx" x="1869" y="698"/>
<rect x="948" y="735" width="922" height="1" fill="#c0c4d0"/><rect x="964" y="714" width="1" height="21" fill="#c0c4d0"/><rect x="1840.500" y="714" width="1" height="21" fill="#c0c4d0"/>
<text class="k0" x="970" y="729.500" textLength="35" lengthAdjust="spacingAndGlyphs">Name</text>
<text class="k0" x="1847" y="729.500" textLength="23" lengthAdjust="spacingAndGlyphs">Lang</text>
<g fill="#eceef0"><rect x="948" y="753" width="922" height="1"/><rect x="948" y="770" width="922" height="1"/><rect x="948" y="787" width="922" height="1"/><rect x="948" y="804" width="922" height="1"/><rect x="948" y="821" width="922" height="1"/><rect x="948" y="838" width="922" height="1"/><rect x="948" y="855" width="922" height="1"/><rect x="948" y="872" width="922" height="1"/><rect x="948" y="889" width="922" height="1"/><rect x="964" y="736" width="1" height="153"/><rect x="1840.500" y="736" width="1" height="153"/></g>
<g style="font-size:12.500px">
<text class="e" x="969.300" y="749" textLength="80" lengthAdjust="spacingAndGlyphs">[External Code]</text>
<text class="k0" x="969.300" y="766.500" textLength="724" lengthAdjust="spacingAndGlyphs">libcocos2d.dll!_vfprintf_l(_iobuf * const _Stream, const char * const _Format, __crt_locale_pointers * const _Locale, char * _ArgList) Line 639</text>
<text class="k0" x="969.300" y="783.500" textLength="443" lengthAdjust="spacingAndGlyphs">libcocos2d.dll!fprintf(_iobuf * const _Stream, const char * const _Format, ...) Line 835</text>
<text class="e" x="969.300" y="800.500" textLength="80" lengthAdjust="spacingAndGlyphs">[External Code]</text>
<text class="k0" x="969.300" y="817.500" textLength="521" lengthAdjust="spacingAndGlyphs">libcocos2d.dll!cocos2d::Image::initWithPngData(const unsigned char * data, long dataLen) Line 783</text>
<text class="k0" x="969.300" y="834.500" textLength="534" lengthAdjust="spacingAndGlyphs">libcocos2d.dll!cocos2d::Image::initWithImageData(const unsigned char * data, long dataLen) Line 423</text>
<text class="k0" x="969.300" y="851.500" textLength="814" lengthAdjust="spacingAndGlyphs">libcocos2d.dll!cocos2d::Image::initWithImageFileThreadSafe(const std::basic_string&lt;char,std::char_traits&lt;char&gt;,std::allocator&lt;char&gt; &gt; &amp; fullpath) Line 386</text>
<text class="k0" x="969.300" y="868.500" textLength="314" lengthAdjust="spacingAndGlyphs">libcocos2d.dll!cocos2d::TextureCache::loadImage() Line 243</text>
<text class="e" x="969.300" y="885.500" textLength="80" lengthAdjust="spacingAndGlyphs">[External Code]</text>
</g>
<text class="k0" x="1846" y="766.500" textLength="22" lengthAdjust="spacingAndGlyphs">C++</text><text class="k0" x="1846" y="783.500" textLength="22" lengthAdjust="spacingAndGlyphs">C++</text><text class="k0" x="1846" y="817.500" textLength="22" lengthAdjust="spacingAndGlyphs">C++</text><text class="k0" x="1846" y="834.500" textLength="22" lengthAdjust="spacingAndGlyphs">C++</text><text class="k0" x="1846" y="851.500" textLength="22" lengthAdjust="spacingAndGlyphs">C++</text><text class="k0" x="1846" y="868.500" textLength="22" lengthAdjust="spacingAndGlyphs">C++</text>
<path d="M953 760H958V757L963 762L958 767V764H953Z" fill="#b7cfa0" stroke="#555"/>
<rect x="1870" y="714" width="17" height="273" fill="#e6e7ee"/>
<path d="M1873 725L1878 720L1883 725Z" fill="#c4c5cc"/><path d="M1873 976H1883L1878 981Z" fill="#c4c5cc"/>
<rect x="952.500" y="743.500" width="858.500" height="160" fill="none" stroke="#f03a3a" stroke-width="1.300"/>

<!-- bottom-right tabs -->
<rect x="1014" y="988" width="491" height="20" fill="#4d6082"/>
<rect x="948" y="987" width="66" height="21" fill="#fff"/>
<text class="k0" x="953" y="1003" textLength="55" lengthAdjust="spacingAndGlyphs">Call Stack</text>
<text class="w" x="1020" y="1004" textLength="69" lengthAdjust="spacingAndGlyphs">Breakpoints</text>
<text class="w" x="1100" y="1004" textLength="106" lengthAdjust="spacingAndGlyphs">Exception Settings</text>
<text class="w" x="1216" y="1004" textLength="111" lengthAdjust="spacingAndGlyphs">Command Window</text>
<text class="w" x="1337" y="1004" textLength="113" lengthAdjust="spacingAndGlyphs">Immediate Window</text>
<text class="w" x="1460" y="1004" textLength="40" lengthAdjust="spacingAndGlyphs">Output</text>

<!-- status bar -->
<rect y="1015" width="1920" height="25" fill="#ca5100"/>
<g>
<text class="w" x="5" y="1032.500" textLength="35" lengthAdjust="spacingAndGlyphs">Ready</text>
<text class="w" x="1160" y="1032.500" textLength="37" lengthAdjust="spacingAndGlyphs">Ln 783</text>
<text class="w" x="1253" y="1032.500" textLength="35" lengthAdjust="spacingAndGlyphs">Col 22</text>
<text class="w" x="1344" y="1032.500" textLength="33" lengthAdjust="spacingAndGlyphs">Ch 22</text>
<text class="w" x="1480" y="1032.500" textLength="21" lengthAdjust="spacingAndGlyphs">INS</text>
<path d="M1620 1033V1023M1615.500 1027.500L1620 1023L1624.500 1027.500" fill="none" stroke="#f0e6dc" stroke-width="2"/>
<text class="w" x="1634" y="1032.500">0</text>
<path d="M1667 1032L1668 1028L1675 1021L1678 1024L1671 1031Z" fill="#f0e6dc"/>
<text class="w" x="1685" y="1032.500">5</text>
<path d="M1722 1020L1729 1027L1722 1034L1715 1027Z" fill="#f0e6dc"/><circle cx="1722" cy="1027" r="1.500" fill="#ca5100"/>
<text class="w" x="1736" y="1032.500" textLength="17" lengthAdjust="spacingAndGlyphs">coc</text>
</g>

<!-- IME widget -->
<rect x="1754" y="995" width="38" height="37" fill="#8ab89a" stroke="#1e90ff" stroke-width="2"/>
<path d="M1763 1025Q1758 1022 1762 1016Q1762 1000 1773 1000Q1784 1000 1784 1016Q1788 1022 1784 1027L1775 1028Z" fill="none" stroke="#d9e8dc" stroke-width="1.500"/>
<circle cx="1786" cy="1027" r="4" fill="#e8a878"/>
<rect x="1793" y="1009.500" width="126.500" height="23.500" fill="#fff" stroke="#1e90ff" stroke-width="1.500"/>
<text x="1797" y="1026.500" style="font-size:14px;fill:#1e88e5">中</text>
<path d="M1830 1015A7 7 0 0 1 1818 1025A7 7 0 0 0 1825 1015Z" fill="#1e88e5"/>
<path d="M1841 1020H1844V1022L1843 1025M1848 1020H1851V1022L1849 1025" fill="#1e88e5" stroke="#1e88e5"/>
<path d="M1858 1028L1866 1019L1869 1016A4 4 0 0 1 1871 1020L1862 1030Z" fill="#1e88e5"/>
<rect x="1882" y="1016" width="11" height="13" fill="none" stroke="#1e88e5" stroke-width="2"/><rect x="1885" y="1013" width="5" height="4" fill="#1e88e5"/><rect x="1885" y="1021" width="5" height="6" fill="#1e88e5"/>
<circle cx="1908" cy="1021" r="6.500" fill="none" stroke="#1e88e5" stroke-width="1.800"/><circle cx="1905.500" cy="1019" r="1" fill="#1e88e5"/><circle cx="1910.500" cy="1019" r="1" fill="#1e88e5"/><path d="M1904.500 1023Q1908 1026 1911.500 1023" fill="none" stroke="#1e88e5" stroke-width="1.200"/>
<g fill="#f2b53a">
<path d="M1802 996A5.500 5.500 0 1 0 1808 1005A6 6 0 0 1 1802 996Z"/>
<path d="M1817 996A5.500 5.500 0 1 0 1823 1005A6 6 0 0 1 1817 996Z"/>
<path d="M1832 996A5.500 5.500 0 1 0 1838 1005A6 6 0 0 1 1832 996Z"/>
<path d="M1846 996L1847.500 999.500L1851 1000L1848.500 1002.500L1849 1006L1846 1004L1843 1006L1843.500 1002.500L1841 1000L1844.500 999.500Z"/>
<path d="M1859 996L1860.500 999.500L1864 1000L1861.500 1002.500L1862 1006L1859 1004L1856 1006L1856.500 1002.500L1854 1000L1857.500 999.500Z"/>
</g>

<!-- taskbar -->
<defs><linearGradient id="tb" x1="0" y1="0" x2="1" y2="0"><stop offset="0" stop-color="#1e5a94"/><stop offset=".7" stop-color="#215f9c"/><stop offset="1" stop-color="#163f68"/></linearGradient></defs>
<rect y="1040" width="1920" height="8" fill="url(#tb)"/><rect y="1040" width="1905" height="1" fill="#0e2238"/><rect y="1041" width="1905" height="1" fill="#b8c6d4"/>
<path d="M14 1048A14 7 0 0 1 42 1048Z" fill="#c8dcec"/>
<g fill="#c8deee">
<rect x="60" y="1042" width="50" height="6"/><rect x="122" y="1042" width="50" height="6"/><rect x="184" y="1042" width="50" height="6"/><rect x="246" y="1042" width="50" height="6"/><rect x="308" y="1042" width="50" height="6"/><rect x="370" y="1042" width="50" height="6"/><rect x="494" y="1042" width="50" height="6"/><rect x="556" y="1042" width="50" height="6"/><rect x="618" y="1042" width="50" height="6"/><rect x="680" y="1042" width="50" height="6"/><rect x="742" y="1042" width="50" height="6"/><rect x="804" y="1042" width="50" height="6"/><rect x="866" y="1042" width="50" height="6"/>
</g>
<rect x="432" y="1042" width="50" height="6" fill="#f4efa0"/><rect x="928" y="1042" width="52" height="6" fill="#5cd4e8"/>
<rect x="75" y="1045" width="18" height="3" fill="#c79a5a"/><circle cx="150" cy="1049" r="6" fill="#d83a2a"/><rect x="208" y="1043" width="12" height="5" fill="#223"/><path d="M265 1048L271 1043L277 1048Z" fill="#e06a6a"/><rect x="320" y="1045" width="24" height="3" fill="#888"/><rect x="390" y="1045" width="12" height="3" fill="#999"/><circle cx="457" cy="1049" r="6" fill="#3a6fc0" stroke="#fff"/><circle cx="523" cy="1049" r="6" fill="#ddd"/><circle cx="581" cy="1049" r="6" fill="#1c2530"/><path d="M636 1048L652 1043L650 1048Z" fill="#5fae3a"/><path d="M706 1048L712 1043L718 1048Z" fill="#2a7bc8"/><circle cx="771" cy="1049" r="6" fill="#fff"/><circle cx="832" cy="1049" r="5" fill="#dfe6ea"/><path d="M896 1048L902 1042L908 1048Z" fill="#6a3a9a"/><path d="M948 1048L955 1043L962 1048Z" fill="#1a3a4a"/>
<rect x="1907" y="1041" width="13" height="7" fill="#3a5a7a" stroke="#9ab"/>
<text x="1855" y="1052" textLength="26" lengthAdjust="spacingAndGlyphs" style="fill:#fff;font-size:12px">14:15</text>
</svg>
</body></html>
